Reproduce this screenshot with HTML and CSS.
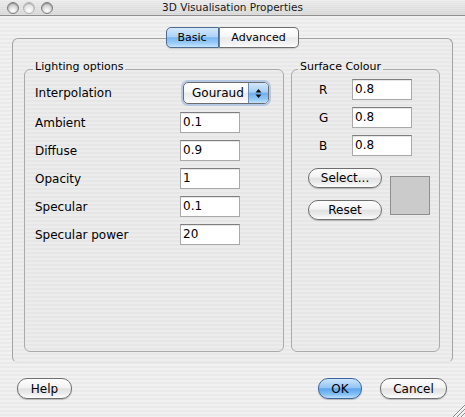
FILE: index.html
```html
<!DOCTYPE html>
<html>
<head>
<meta charset="utf-8">
<title>3D Visualisation Properties</title>
<link rel="stylesheet" href="styles.css">
</head>
<body>
<div class="window">
  <header class="titlebar">
    <div class="lights">
      <span class="light"></span><span class="light dim"></span><span class="light"></span>
    </div>
    <div class="title">3D Visualisation Properties</div>
    <div></div>
  </header>
  <main class="main">
    <div class="tabs">
      <span class="tab tab-basic active">Basic</span><span class="tab tab-adv">Advanced</span>
    </div>
    <div class="tabbox">
      <fieldset class="group lighting">
        <legend>Lighting options</legend>
        <div class="form">
          <span class="label">Interpolation</span>
          <div class="popup">
            <span class="popup-text">Gouraud</span>
            <span class="popup-arrows">
              <svg width="7" height="11" viewBox="0 0 7 11"><path d="M3.5 1 L6.5 4.5 H0.5 Z" fill="#111"/><path d="M3.5 10 L6.5 6.5 H0.5 Z" fill="#111"/></svg>
            </span>
          </div>
          <span class="label">Ambient</span><span class="field">0.1</span>
          <span class="label">Diffuse</span><span class="field">0.9</span>
          <span class="label">Opacity</span><span class="field">1</span>
          <span class="label">Specular</span><span class="field">0.1</span>
          <span class="label">Specular power</span><span class="field">20</span>
        </div>
      </fieldset>
      <fieldset class="group surface">
        <legend>Surface Colour</legend>
        <div class="rgb">
          <span class="label">R</span><span class="field">0.8</span>
          <span class="label">G</span><span class="field">0.8</span>
          <span class="label">B</span><span class="field">0.8</span>
        </div>
        <div class="colour-actions">
          <div class="btn-col">
            <span class="btn wide">Select...</span>
            <span class="btn wide">Reset</span>
          </div>
          <div class="swatch"></div>
        </div>
      </fieldset>
    </div>
  </main>
  <footer class="footer">
    <span class="btn help">Help</span>
    <div class="footer-right">
      <span class="btn primary ok">OK</span>
      <span class="btn cancel">Cancel</span>
    </div>
  </footer>
  <svg class="grip" width="13" height="13" viewBox="0 0 13 13">
    <path d="M13 1 L1 13 M13 5 L5 13 M13 9 L9 13" stroke="#8a8a8a" stroke-width="1"/>
    <path d="M13 2 L2 13 M13 6 L6 13 M13 10 L10 13" stroke="#fafafa" stroke-width="1"/>
  </svg>
</div>
</body>
</html>
```

FILE: styles.css
```css
* { box-sizing: border-box; }
html, body { margin: 0; padding: 0; }
body {
  width: 465px;
  height: 417px;
  overflow: hidden;
  font-family: "DejaVu Sans", sans-serif;
  font-size: 12px;
  color: #000;
  background: repeating-linear-gradient(to bottom, #f1f1f1 0 2px, #eaeaea 2px 4px);
}
.window {
  position: relative;
  width: 465px;
  height: 417px;
  display: flex;
  flex-direction: column;
}
.titlebar {
  height: 16px;
  border-bottom: 1px solid #8e8e8e;
  display: grid;
  grid-template-columns: 1fr auto 1fr;
  align-items: center;
  background:
    repeating-linear-gradient(to bottom, rgba(255,255,255,0.25) 0 1px, rgba(0,0,0,0) 1px 2px),
    linear-gradient(#e9e9e9, #d4d4d4);
}
.lights {
  display: flex;
  align-items: center;
  padding-left: 7px;
  gap: 4px;
}
.light {
  width: 12px;
  height: 12px;
  border-radius: 50%;
  border: 1px solid #7d7d7d;
  background: radial-gradient(circle at 50% 75%, #ffffff 0, #e4e4e4 35%, #bdbdbd 80%);
  box-shadow: inset 0 1px 1px rgba(0,0,0,0.25);
}
.light.dim {
  border-color: #b4b4b4;
  background: radial-gradient(circle at 50% 75%, #ffffff 0, #ececec 40%, #d6d6d6 85%);
}
.light + .light.dim + .light { margin-left: 2px; }
.title {
  font-size: 10.5px;
  color: #1a1a1a;
  line-height: 15px;
}
.main {
  padding: 11px 12px 0 12px;
}
.tabs {
  display: flex;
  justify-content: center;
  position: relative;
  z-index: 1;
  height: 21px;
  padding-right: 1px;
}
.tab {
  height: 21px;
  font-size: 11px;
  display: flex;
  align-items: center;
  justify-content: center;
  border: 1px solid #6f6f6f;
  background: linear-gradient(#ffffff 0%, #f6f6f6 45%, #e9e9e9 52%, #f3f3f3 85%, #ffffff 100%);
  box-shadow: 0 1px 1px rgba(0,0,0,0.15);
}
.tab-basic {
  width: 53px;
  border-radius: 5px 0 0 5px;
  border-color: #4f6c93;
  background: linear-gradient(#d5e8fb 0%, #aed3f7 45%, #7ab6f0 52%, #9cccf7 80%, #c6e4fd 100%);
}
.tab-adv {
  width: 80px;
  border-left: 1px solid #4f86c8;
  border-radius: 0 5px 5px 0;
}
.tabbox {
  margin-top: -10px;
  height: 325px;
  border: 1px solid #a3a3a3;
  border-bottom-color: #e4e4e4;
  border-radius: 6px;
  padding: 21px 12px 10px 11px;
  display: flex;
  gap: 7px;
  background: repeating-linear-gradient(to bottom, #eeeeee 0 2px, #e8e8e8 2px 4px);
}
.group {
  margin: 0;
  min-width: 0;
  border: 1px solid #aaaaaa;
  border-radius: 6px;
  background: repeating-linear-gradient(to bottom, #ececec 0 2px, #e6e6e6 2px 4px);
}
.group legend {
  font-size: 11px;
  line-height: 14px;
  padding: 0 2px 4px 2px;
  margin-left: -2px;
}
.lighting {
  width: 260px;
  padding: 4px 10px 0 10px;
}
.surface {
  width: 149px;
  padding: 1px 8px 0 8px;
}
.form {
  display: grid;
  grid-template-columns: 145px 60px;
  grid-template-rows: 23px;
  grid-auto-rows: 21px;
  row-gap: 7px;
  align-items: center;
}
.label {
  font-size: 12px;
  white-space: nowrap;
}
.form .label:first-child {
  align-self: center;
  margin-top: -2px;
}
.field {
  height: 21px;
  background: #fff;
  border: 1px solid #a9a9a9;
  border-top-color: #7e7e7e;
  box-shadow: inset 0 1px 0 #e6e6e6;
  padding-left: 2px;
  font-size: 12px;
  line-height: 19px;
}
.popup {
  align-self: start;
  width: 86px;
  height: 22px;
  margin-left: 3px;
  border: 1px solid #6c6c6c;
  border-radius: 5px;
  display: flex;
  overflow: hidden;
  background: linear-gradient(#ffffff 0%, #f7f7f7 45%, #ebebeb 52%, #f5f5f5 85%, #ffffff 100%);
  box-shadow: 0 0 0 2px rgba(120, 165, 225, 0.45);
}
.popup-text {
  flex: 1;
  padding-left: 8px;
  font-size: 12px;
  line-height: 20px;
}
.popup-arrows {
  width: 20px;
  display: flex;
  align-items: center;
  justify-content: center;
  border-left: 1px solid #6b8db9;
  background: linear-gradient(#d2e6fb 0%, #a7cff6 45%, #6fb0ef 52%, #92c7f6 80%, #c1e1fd 100%);
}
.rgb {
  margin-left: 19px;
  display: grid;
  grid-template-columns: 33px 60px;
  grid-auto-rows: 21px;
  row-gap: 7px;
  align-items: center;
}
.colour-actions {
  margin-top: 12px;
  margin-left: 8px;
  display: flex;
  align-items: center;
  gap: 8px;
}
.btn-col {
  display: flex;
  flex-direction: column;
  gap: 12px;
}
.btn {
  height: 20px;
  border-radius: 10px;
  border: 1px solid #6f6f6f;
  background: linear-gradient(#fdfdfd 0%, #f3f3f3 45%, #e1e1e1 52%, #eeeeee 80%, #ffffff 100%);
  box-shadow: 0 1px 1px rgba(0,0,0,0.22);
  display: flex;
  align-items: center;
  justify-content: center;
  font-size: 12px;
  line-height: 18px;
}
.btn.wide { width: 74px; }
.swatch {
  width: 40px;
  height: 39px;
  background: #cbcbcb;
  border: 1px solid #8f8f8f;
  margin-top: 3px;
}
.footer {
  margin-top: 15px;
  padding: 0 18px 0 17px;
  display: flex;
  justify-content: space-between;
  align-items: center;
}
.footer .btn { height: 21px; }
.help { width: 55px; }
.footer-right {
  display: flex;
  gap: 18px;
}
.ok { width: 44px; }
.cancel { width: 67px; }
.btn.primary {
  border-color: #3b679c;
  background: linear-gradient(#cce4fb 0%, #95c6f4 45%, #5ea5ec 52%, #82bff6 80%, #bfe0fd 100%);
}
.grip {
  position: absolute;
  right: 0;
  bottom: 0;
}
```
